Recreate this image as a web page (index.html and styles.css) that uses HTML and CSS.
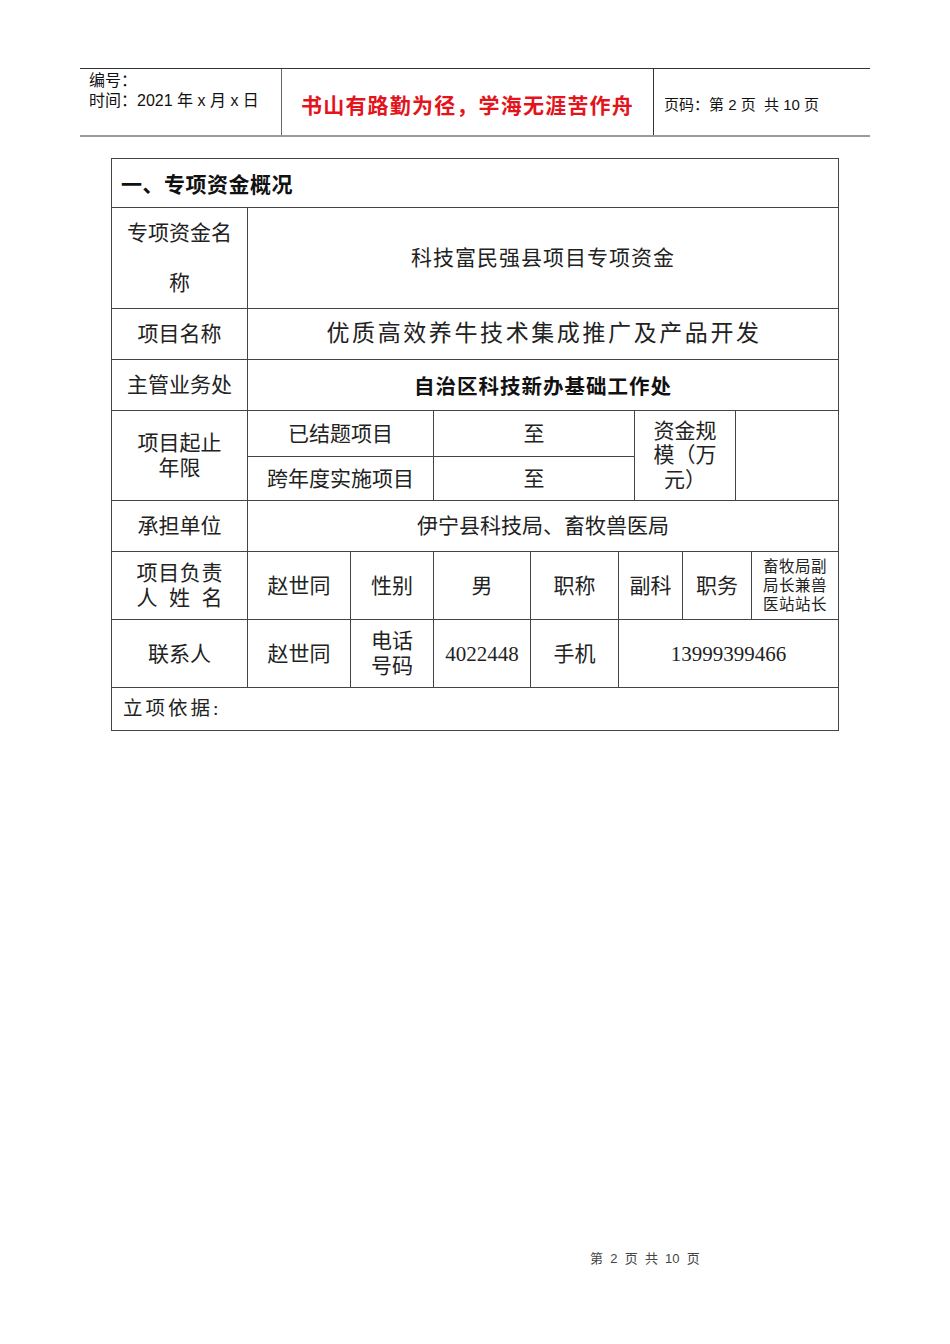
FILE: index.html
```html
<!DOCTYPE html>
<html lang="zh-CN">
<head>
<meta charset="utf-8">
<title>专项资金概况</title>
<link rel="stylesheet" href="styles.css">
</head>
<body>
<div class="page">
  <div class="doc-header">
    <div class="hd-left">
      <div>编号：</div>
      <div>时间：2021 年 x 月 x 日</div>
    </div>
    <div class="hd-mid">书山有路勤为径，学海无涯苦作舟</div>
    <div class="hd-right">页码：第 2 页&nbsp; 共 10 页</div>
  </div>

  <table class="form">
    <colgroup>
      <col class="c1"><col class="c2"><col class="c3"><col class="c4"><col class="c5">
      <col class="c6"><col class="c7"><col class="c8"><col class="c9"><col class="c10">
    </colgroup>
    <tr class="r-title">
      <td colspan="10" class="title">一、专项资金概况</td>
    </tr>
    <tr class="r-fund">
      <td class="label tall">专项资金名<br>称</td>
      <td colspan="9" class="val spaced1">科技富民强县项目专项资金</td>
    </tr>
    <tr class="r-std">
      <td class="label">项目名称</td>
      <td colspan="9" class="val big">优质高效养牛技术集成推广及产品开发</td>
    </tr>
    <tr class="r-std">
      <td class="label">主管业务处</td>
      <td colspan="9" class="val bold">自治区科技新办基础工作处</td>
    </tr>
    <tr class="r-sub1">
      <td rowspan="2" class="label lh24">项目起止<br>年限</td>
      <td colspan="2" class="val">已结题项目</td>
      <td colspan="3" class="val">至</td>
      <td colspan="2" rowspan="2" class="val lh24">资金规<br>模（万<br>元）</td>
      <td colspan="2" rowspan="2"></td>
    </tr>
    <tr class="r-sub2">
      <td colspan="2" class="val">跨年度实施项目</td>
      <td colspan="3" class="val">至</td>
    </tr>
    <tr class="r-std">
      <td class="label">承担单位</td>
      <td colspan="9" class="val">伊宁县科技局、畜牧兽医局</td>
    </tr>
    <tr class="r-person">
      <td class="label lh25"><span class="just">项目负责</span><br><span class="just">人姓名</span></td>
      <td class="val">赵世同</td>
      <td class="val">性别</td>
      <td class="val">男</td>
      <td class="val">职称</td>
      <td colspan="2" class="val">副科</td>
      <td colspan="2" class="val">职务</td>
      <td class="val small">畜牧局副<br>局长兼兽<br>医站站长</td>
    </tr>
    <tr class="r-person">
      <td class="label">联系人</td>
      <td class="val">赵世同</td>
      <td class="val lh25">电话<br>号码</td>
      <td class="val num">4022448</td>
      <td class="val">手机</td>
      <td colspan="5" class="val num">13999399466</td>
    </tr>
    <tr class="r-basis">
      <td colspan="10" class="basis">立项依据:</td>
    </tr>
  </table>

  <div class="doc-footer">第&nbsp; 2&nbsp; 页&nbsp; 共&nbsp; 10&nbsp; 页</div>
</div>
</body>
</html>
```

FILE: styles.css
```css
html, body {
  margin: 0;
  padding: 0;
  background: #ffffff;
}

.page {
  width: 950px;
  height: 1344px;
  box-sizing: border-box;
  padding-top: 68px;
  overflow: hidden;
  font-family: "Liberation Serif", "Noto Sans CJK SC", serif;
  color: #222222;
}

/* ---------- header ---------- */
.doc-header {
  margin-left: 80px;
  width: 790px;
  height: 66px;
  border-top: 1px solid #333333;
  border-bottom: 2px solid #9a9a9a;
  display: flex;
  font-family: "Liberation Sans", "Noto Sans CJK SC", sans-serif;
}

.hd-left {
  width: 192px;
  padding: 2px 0 0 9px;
  font-size: 16px;
  line-height: 20px;
  color: #111111;
  border-right: 1px solid #666666;
}

.hd-mid {
  width: 372px;
  border-right: 1px solid #333333;
  display: flex;
  align-items: center;
  justify-content: center;
  padding-top: 4px;
  box-sizing: border-box;
  color: #e3141c;
  font-family: "Noto Sans CJK SC", sans-serif;
  font-weight: 700;
  font-size: 21px;
  letter-spacing: 1.2px;
}

.hd-right {
  flex: 1;
  display: flex;
  align-items: center;
  padding-left: 10px;
  padding-top: 2px;
  font-size: 15px;
  color: #111111;
}

/* ---------- table ---------- */
.form {
  margin: 21px 0 0 111px;
  width: 728px;
  border-collapse: collapse;
  table-layout: fixed;
  border: 1px solid #333333;
  font-size: 21px;
}

.c1 { width: 136px; }
.c2 { width: 103px; }
.c3 { width: 83px; }
.c4 { width: 97px; }
.c5 { width: 88px; }
.c6 { width: 16px; }
.c7 { width: 48px; }
.c8 { width: 53px; }
.c9 { width: 16px; }
.c10 { width: 87px; }

.form td {
  border: 1px solid #444444;
  padding: 0;
  text-align: center;
  vertical-align: middle;
  line-height: 26px;
}

.r-title { height: 49px; }
.r-fund { height: 100px; }
.r-std { height: 51px; }
.r-sub1 { height: 46px; }
.r-sub2 { height: 44px; }
.r-person { height: 68px; }
.r-basis { height: 43px; }

.form td.title {
  text-align: left;
  padding-left: 9px;
  font-family: "Noto Sans CJK SC", sans-serif;
  font-weight: 700;
  font-size: 21px;
  letter-spacing: 0.5px;
  color: #111111;
}

.form td.tall { line-height: 50px; }
.form td.lh24 { line-height: 24.5px; }
.form td.lh25 { line-height: 25px; }

.spaced1 { letter-spacing: 1px; }

.form td.big {
  font-size: 23px;
  letter-spacing: 2.6px;
  padding-left: 2px;
}

.form td.bold {
  font-family: "Noto Sans CJK SC", sans-serif;
  font-weight: 700;
  font-size: 20.5px;
  letter-spacing: 1px;
  color: #111111;
}

.just {
  display: inline-block;
  width: 86px;
  text-align: justify;
  text-align-last: justify;
}

.form td.small {
  font-size: 15.5px;
  line-height: 19px;
  letter-spacing: 0.5px;
}

.form td.num {
  font-family: "Liberation Serif", serif;
  font-size: 21px;
}

.form td.basis {
  text-align: left;
  padding-left: 11px;
  font-size: 19.5px;
  letter-spacing: 3px;
}

/* ---------- footer ---------- */
.doc-footer {
  margin-top: 517px;
  padding-left: 590px;
  font-family: "Liberation Sans", "Noto Sans CJK SC", sans-serif;
  font-size: 13px;
  color: #444444;
}
```
